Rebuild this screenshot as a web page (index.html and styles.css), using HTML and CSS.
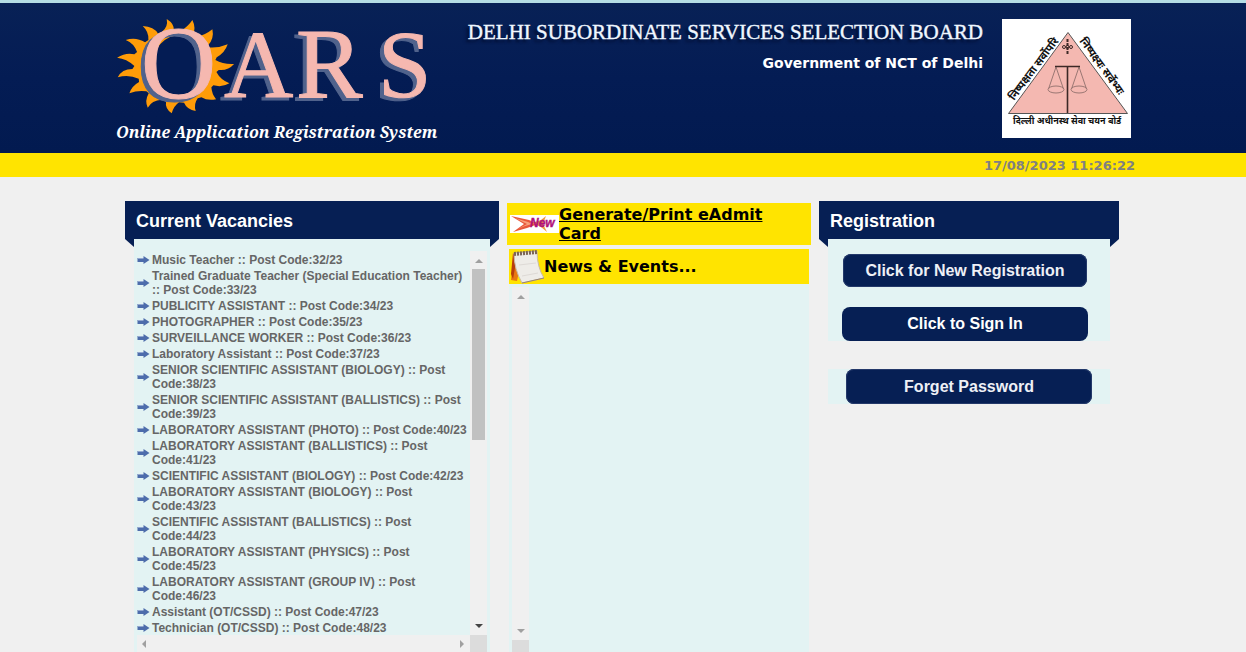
FILE: index.html
```html
<!DOCTYPE html>
<html lang="en">
<head>
<meta charset="utf-8">
<meta name="viewport" content="width=device-width, initial-scale=1">
<title>Online Application Registration System</title>
<link rel="stylesheet" href="styles.css">
</head>
<body>
<header class="masthead">
  <div class="masthead-inner">
    <div class="brand">
      <svg class="brand-logo" viewBox="0 -12 316 122" role="img" aria-label="OARS">
        <g transform="translate(-13 -15) scale(.3333)">
          <path fill="#ff9c08" d="M185 57 Q209 72 206 91 L222 97 Q249 80 262 60 Q274 84 263 108 L268 113 Q299 107 322 88 Q328 116 309 136 L309 142 Q341 145 368 133 Q359 159 335 172 L331 180 Q355 194 387 192 Q369 213 341 210 L334 216 Q346 239 373 250 Q352 263 325 256 L319 262 Q320 282 333 298 Q307 303 289 292 L278 295 Q265 313 272 333 Q246 329 237 308 L222 307 Q206 318 200 340 Q179 325 183 305 L170 299 Q140 301 128 323 Q118 303 131 280 L124 274 Q98 270 73 280 Q80 258 102 246 L101 236 Q70 223 38 232 Q50 207 82 207 L88 198 Q65 176 36 173 Q63 156 88 163 L96 156 Q87 130 62 120 Q93 110 120 127 L130 120 Q132 96 113 78 Q147 80 159 101 L170 96 Q190 81 185 57Z"/>
          <ellipse cx="226" cy="197" rx="85" ry="92" fill="#041c54"/>
        </g>
        <g class="brand-letters">
          <text class="big" x="23" y="83">O</text><text class="mid" x="178" y="82">R</text><text x="106 260" y="82">AS</text>
        </g>
      </svg>
      <p class="brand-tagline">Online Application Registration System</p>
    </div>
    <div class="board">
      <h1 class="board-name">DELHI SUBORDINATE SERVICES SELECTION BOARD</h1>
      <p class="board-gov">Government of NCT of Delhi</p>
    </div>
    <svg class="emblem" viewBox="0 0 129 119" role="img" aria-label="Board emblem">
      <rect width="129" height="119" fill="#fff"/>
      <path d="M66 13.500 L125.500 94.500 H6.500Z" fill="#f4b8b1" stroke="#555" stroke-width="1"/>
      <g fill="none" stroke="#9a7773" stroke-width="1">
        <path d="M54 48 L46.500 70 M54 48 L61.500 70 M77 48 L69.500 70 M77 48 L84.500 70"/>
        <ellipse cx="54" cy="70.500" rx="8" ry="3.500"/><ellipse cx="77" cy="70.500" rx="8" ry="3.500"/>
      </g>
      <path d="M53 47.500 H78 M65.500 47 V94" stroke="#3c2826" stroke-width="1.600" fill="none"/>
      <path d="M65.500 20 V36" stroke="#3c2826" stroke-width="2" stroke-dasharray="3 1" fill="none"/>
      <g fill="none" stroke="#3c2826"><circle cx="62" cy="28" r="1.500"/><circle cx="65.500" cy="28" r="1.500"/><circle cx="69" cy="28" r="1.500"/></g>
      <g class="emblem-words">
        <text class="base" x="11" y="105">दिल्ली अधीनस्थ सेवा चयन बोर्ड</text>
        <text transform="translate(12 82) rotate(-53)">निष्पक्षता सर्वोपरि</text>
        <text transform="translate(77 22) rotate(54)">निष्पक्ष्यः सर्वेभ्यः</text>
      </g>
    </svg>
  </div>
</header>
<div class="clock-bar"><time class="clock" datetime="2023-08-17T11:26:22">17/08/2023 11:26:22</time></div>

<svg class="defs" aria-hidden="true">
  <symbol id="arrow" viewBox="0 0 12 8"><path d="M0 2 H6 V0 L12 4 L6 8 V6 H0Z" fill="#4d6cab"/><path d="M0 2.500 H6" stroke="#93a7cf" stroke-width="1"/></symbol>
</svg>

<main class="columns">
  <section class="panel">
    <h2 class="panel-title">Current Vacancies</h2>
    <div class="panel-body vacancies">
      <ul class="vacancy-list">
        <li><svg><use href="#arrow"/></svg><span>Music Teacher :: Post Code:32/23</span></li>
        <li><svg><use href="#arrow"/></svg><span>Trained Graduate Teacher (Special Education Teacher) :: Post Code:33/23</span></li>
        <li><svg><use href="#arrow"/></svg><span>PUBLICITY ASSISTANT :: Post Code:34/23</span></li>
        <li><svg><use href="#arrow"/></svg><span>PHOTOGRAPHER :: Post Code:35/23</span></li>
        <li><svg><use href="#arrow"/></svg><span>SURVEILLANCE WORKER :: Post Code:36/23</span></li>
        <li><svg><use href="#arrow"/></svg><span>Laboratory Assistant :: Post Code:37/23</span></li>
        <li><svg><use href="#arrow"/></svg><span>SENIOR SCIENTIFIC ASSISTANT (BIOLOGY) :: Post Code:38/23</span></li>
        <li><svg><use href="#arrow"/></svg><span>SENIOR SCIENTIFIC ASSISTANT (BALLISTICS) :: Post Code:39/23</span></li>
        <li><svg><use href="#arrow"/></svg><span>LABORATORY ASSISTANT (PHOTO) :: Post Code:40/23</span></li>
        <li><svg><use href="#arrow"/></svg><span>LABORATORY ASSISTANT (BALLISTICS) :: Post Code:41/23</span></li>
        <li><svg><use href="#arrow"/></svg><span>SCIENTIFIC ASSISTANT (BIOLOGY) :: Post Code:42/23</span></li>
        <li><svg><use href="#arrow"/></svg><span>LABORATORY ASSISTANT (BIOLOGY) :: Post<br>Code:43/23</span></li>
        <li><svg><use href="#arrow"/></svg><span>SCIENTIFIC ASSISTANT (BALLISTICS) :: Post<br>Code:44/23</span></li>
        <li><svg><use href="#arrow"/></svg><span>LABORATORY ASSISTANT (PHYSICS) :: Post<br>Code:45/23</span></li>
        <li><svg><use href="#arrow"/></svg><span>LABORATORY ASSISTANT (GROUP IV) :: Post<br>Code:46/23</span></li>
        <li><svg><use href="#arrow"/></svg><span>Assistant (OT/CSSD) :: Post Code:47/23</span></li>
        <li><svg><use href="#arrow"/></svg><span>Technician (OT/CSSD) :: Post Code:48/23</span></li>
      </ul>
      <div class="track vertical" aria-hidden="true"><i class="tip up"></i><i class="thumb"></i><i class="tip down active"></i></div>
      <div class="track horizontal" aria-hidden="true"><i class="tip left"></i><i class="tip right"></i></div>
      <div class="corner"></div>
    </div>
  </section>

  <section class="news">
    <div class="admit-bar">
      <svg class="new-badge" viewBox="0 0 49 18" role="img" aria-label="New">
        <rect width="49" height="18" fill="#fff"/>
        <path d="M1 1 L19 5 L28 9 L17 13 L3 17 L14 9Z" fill="#e8573a"/>
        <path d="M5 3 L18 7 L22 9 L15 11 L8 14 L17 9Z" fill="#f7a07c"/>
        <path d="M36 1 L31 5 L22 8 L31 12 L37 17 L33 9Z" fill="#ef9a43"/>
        <text class="new-word" x="20" y="12">New</text>
      </svg>
      <a class="admit-link" href="#">Generate/Print eAdmit Card</a>
    </div>
    <div class="news-box">
      <h2 class="news-title">
        <svg class="notepad" viewBox="0 0 35 35" aria-hidden="true">
          <path d="M5 5 L2 31 L8 32 L13 8Z" fill="#e87812"/><path d="M4 4 L2 25 L4 30 L8 8Z" fill="#b83c0c"/>
          <path d="M5 4 L28 2 Q28 18 35 29 L13 34 Q5 20 5 4Z" fill="#eeece8" stroke="#c9bba8"/>
          <path d="M13 34 L35 29" stroke="#99836b"/>
          <path d="M5 5 L28 3" stroke="#7a6455" stroke-width="4" stroke-dasharray="2 1"/>
          <path d="M10 16 L27 14 M13 27 L29 24" stroke="#dedad6"/>
        </svg>
        News &amp; Events...
      </h2>
      <div class="news-body">
        <div class="track vertical" aria-hidden="true"><i class="tip up"></i><i class="tip down"></i></div>
        <div class="corner"></div>
      </div>
    </div>
  </section>

  <section class="panel">
    <h2 class="panel-title">Registration</h2>
    <div class="panel-body actions">
      <button class="action soft register" type="button">Click for New Registration</button>
      <button class="action" type="button">Click to Sign In</button>
    </div>
    <div class="panel-body forgot">
      <button class="action soft" type="button">Forget Password</button>
    </div>
  </section>
</main>
</body>
</html>
```
FILE: styles.css
```css
* { box-sizing: border-box; }
body { margin: 0; background: #f0f0f0; font-family: "Liberation Sans", Arial, sans-serif; }
h1, h2, p, ul { margin: 0; padding: 0; }

.masthead { border-top: 3px solid #b5dde5; background: linear-gradient(#082156, #041c54 50%, #021a50); }
.masthead-inner { display: flex; max-width: 1016px; margin: 0 auto; padding: 12px 0 10px; min-height: 150px; }
.brand { flex: 0 0 316px; }
.brand-logo { display: block; width: 100%; height: 122px; margin: -12px 0 -8px; }
.brand-letters { font-family: "Liberation Serif", serif; font-size: 96px; fill: #f5b8b0; stroke: #f5b8b0; stroke-width: 1; filter: drop-shadow(-4px 3px 0 #50628c); }
.brand-letters .big { font-size: 104px; }
.brand-letters .mid { font-size: 100px; }
.brand-tagline { padding: 4px 0 0 1px; color: #fff; font: italic bold 16px/22px "Noto Serif", "Droid Serif", "Liberation Serif", serif; white-space: nowrap; }
.board { flex: 1; padding: 4px 19px 0 0; text-align: right; color: #fff; white-space: nowrap; }
.board-name { color: #f0f7ff; font: 21px/26px "Liberation Serif", serif; text-shadow: -3px 3px 3px #010d30; -webkit-text-stroke: 0.4px #f0f7ff; }
.board-gov { padding-top: 9px; font: bold 14px/18px "DejaVu Sans", Verdana, sans-serif; }
.emblem { flex: 0 0 129px; width: 129px; height: 119px; margin-top: 4px; }
.emblem-words { font: bold 11px "Noto Sans Devanagari", "Noto Sans", sans-serif; fill: #111; }
.emblem-words .base { font-size: 9px; }

.clock-bar { background: #ffe400; height: 24px; text-align: center; }
.clock { display: block; max-width: 1024px; margin: 0 auto; text-align: right; color: #808080; font: bold 13px/25px "DejaVu Sans", Verdana, sans-serif; }
.defs { display: none; }

.columns { display: grid; grid-template-columns: 374fr 304fr 300fr; gap: 8px; max-width: 996px; margin: 0 auto; padding: 24px 2px 0 0; }
.panel-title { position: relative; height: 38px; padding-left: 11px; background: #061f54; color: #fff; font-size: 18px; line-height: 40px; }
.panel-title::before, .panel-title::after { content: ""; position: absolute; top: 100%; width: 9px; height: 8px; background: #061f54; }
.panel-title::before { left: 0; clip-path: polygon(0 0, 100% 0, 100% 100%); }
.panel-title::after { right: 0; clip-path: polygon(0 0, 100% 0, 0 100%); }
.panel-body { margin: 0 9px; background: #e3f3f3; }

.vacancies { display: grid; grid-template-columns: 1fr 17px; grid-template-rows: auto 17px; padding: 12px 3px 0; }
.vacancy-list { list-style: none; padding-top: 2px; color: #666; font-size: 12px; font-weight: bold; line-height: 14px; }
.vacancy-list li { display: flex; align-items: center; gap: 2px; padding-bottom: 2px; }
.vacancy-list li:last-child { padding-bottom: 0; }
.vacancy-list svg { flex: none; width: 13px; height: 8px; }

.track { display: flex; justify-content: space-between; align-items: center; background: #f0f0f0; }
.vertical { flex-direction: column; padding: 8px 0 7px; }
.horizontal { padding: 0 6px 0 5px; }
.tip { border: 4px solid transparent; }
.up { border-top: 0; border-bottom-color: #a0a0a0; }
.down { border-bottom: 0; border-top-color: #a0a0a0; }
.active { border-top-color: #444; }
.left { border-left: 0; border-right-color: #a0a0a0; }
.right { border-right: 0; border-left-color: #a0a0a0; }
.thumb { width: 13px; height: 171px; margin: 6px 0 auto; background: #c1c1c1; }
.corner { background: #dcdcdc; }

.news { display: flex; flex-direction: column; gap: 4px; padding-top: 2px; font-family: "DejaVu Sans", Verdana, sans-serif; font-size: 16px; font-weight: bold; }
.admit-bar { display: flex; align-items: center; padding: 2px; background: #ffe400; }
.new-badge { flex: none; width: 49px; height: 18px; margin-left: 1px; }
.new-word { font: italic bold 12px "Liberation Sans", sans-serif; fill: #b0107a; stroke: #b0107a; stroke-width: 0.4; }
.admit-link { padding-right: 20px; color: #000; line-height: 19px; }
.news-box { flex: 1; display: flex; flex-direction: column; margin: 0 2px; }
.news-title { display: flex; align-items: center; height: 35px; background: #ffe400; font-size: 16px; }
.notepad { width: 35px; height: 35px; }
.news-body { flex: 1; display: grid; grid-template: 1fr 12px / 17px; padding: 3px 3px 0; background: #e3f3f3; }

.actions { display: flex; flex-direction: column; align-items: center; gap: 20px; padding: 15px 22px 0 14px; }
.forgot { margin-top: 28px; padding: 0 18px; }
.action { display: block; width: 100%; height: 34px; padding: 0; border: 0; border-radius: 8px; background: #061f54; color: #fff; font: bold 16px/32px "Liberation Sans", Arial, sans-serif; }
.soft { color: #eef0f6; box-shadow: inset 0 0 0 1px #24396a; }
.register { width: 99%; height: 33px; line-height: 31px; }
.forgot .action { height: 35px; }
```
